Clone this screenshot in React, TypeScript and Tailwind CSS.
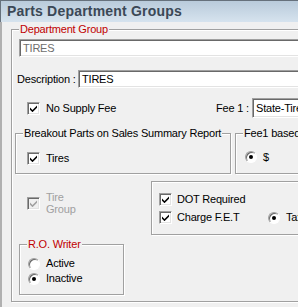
import type { ReactNode } from 'react';

function CheckMark({ disabled }: { disabled?: boolean }) {
  return (
    <svg width="7" height="7" viewBox="0 0 7 7">
      <path d="M0 2.5L2.5 5L7 0.5V2.8L2.5 7.2L0 4.8Z" fill={disabled ? '#a0a0a0' : '#000'} />
    </svg>
  );
}

function CheckBox({ checked, disabled }: { checked?: boolean; disabled?: boolean }) {
  return (
    <span
      className={`flex h-[13px] w-[13px] shrink-0 items-center justify-center border border-t-[#a0a0a0] border-l-[#a0a0a0] border-b-white border-r-white shadow-[inset_1px_1px_0_#696969,inset_-1px_-1px_0_#e3e3e3] ${
        disabled ? 'bg-[#f0f0f0]' : 'bg-white'
      }`}
    >
      {checked && <CheckMark disabled={disabled} />}
    </span>
  );
}

function Radio({ checked }: { checked?: boolean }) {
  return (
    <span className="flex h-[12px] w-[12px] shrink-0 items-center justify-center rounded-full border border-t-[#a0a0a0] border-l-[#a0a0a0] border-b-white border-r-white bg-white shadow-[inset_1px_1px_0_#696969]">
      {checked && <span className="h-[4px] w-[4px] rounded-full bg-black" />}
    </span>
  );
}

function TextBox({ value, disabled, className = '' }: { value: string; disabled?: boolean; className?: string }) {
  return (
    <div
      className={`flex items-center overflow-hidden whitespace-nowrap border border-t-[#a0a0a0] border-l-[#a0a0a0] border-b-white border-r-white bg-white pl-[3px] shadow-[inset_1px_1px_0_#696969,inset_-1px_-1px_0_#e3e3e3] ${
        disabled ? 'text-[#6d6d6d]' : 'text-black'
      } ${className}`}
    >
      {value}
    </div>
  );
}

function GroupBox({
  label,
  red,
  className = '',
  children,
}: {
  label?: string;
  red?: boolean;
  className?: string;
  children: ReactNode;
}) {
  return (
    <div className={`shrink-0 border border-[#a0a0a0] shadow-[inset_1px_1px_0_white,1px_1px_0_white] ${className}`}>
      {label && (
        <div
          className={`-mt-[7px] ml-[7px] h-[13px] w-fit whitespace-nowrap bg-[#f0f0f0] px-px leading-[13px] ${
            red ? 'text-[#c00000]' : 'text-black'
          }`}
        >
          {label}
        </div>
      )}
      {children}
    </div>
  );
}

export default function App() {
  return (
    <div className="h-[307px] w-[298px] overflow-hidden bg-[#f0f0f0] font-['Liberation_Sans',Arial,sans-serif] text-[11px] tracking-[-0.2px] text-black">
      <div className="flex h-[22px] items-center border-t border-l border-[#66717c] bg-gradient-to-b from-[#b9cbdb] to-[#d6e3ee] pl-[6px] text-[14px] font-bold tracking-[0.2px] text-[#3b4856]">
        Parts Department Groups
      </div>

      <div className="flex h-[285px] border-l-2 border-[#b0b0b0] pl-[9px] pt-[7px]">
        <GroupBox label="Department Group" red className="h-[273px] w-[300px]">
          <TextBox value="TIRES" disabled className="mt-[3px] ml-[7px] h-[18px]" />

          <div className="mt-[13px] ml-[5px] flex items-center">
            <span className="w-[61px] shrink-0">Description :</span>
            <TextBox value="TIRES" className="h-[18px] flex-1" />
          </div>

          <div className="mt-[10px] flex h-[20px] items-center pl-[15px]">
            <CheckBox checked />
            <span className="ml-[6px] w-[170px] shrink-0">No Supply Fee</span>
            <span className="w-[36px] shrink-0">Fee 1 :</span>
            <TextBox value="State-Tire Fee" className="h-[20px] flex-1 pl-[2px]" />
          </div>

          <div className="mt-[15px] flex">
            <GroupBox label="Breakout Parts on Sales Summary Report" className="ml-[3px] h-[41px] w-[216px]">
              <div className="mt-[10px] ml-[11px] flex items-center">
                <CheckBox checked />
                <span className="ml-[6px]">Tires</span>
              </div>
            </GroupBox>
            <GroupBox label="Fee1 based on" className="ml-[4px] h-[41px] flex-1">
              <div className="mt-[9px] ml-[9px] flex items-center">
                <Radio checked />
                <span className="ml-[6px]">$</span>
              </div>
            </GroupBox>
          </div>

          <div className="mt-[7px] flex">
            <div className="w-[139px] shrink-0">
              <div className="mt-[10px] ml-[15px] flex items-center">
                <CheckBox checked disabled />
                <span className="ml-[6px] leading-[12px] text-[#a0a0a0]">
                  Tire
                  <br />
                  Group
                </span>
              </div>

              <GroupBox label="R.O. Writer" red className="mt-[29px] ml-[7px] h-[51px] w-[105px]">
                <div className="mt-[5px] ml-[8px] flex h-[15px] items-center">
                  <Radio />
                  <span className="ml-[6px]">Active</span>
                </div>
                <div className="ml-[8px] flex h-[15px] items-center">
                  <Radio checked />
                  <span className="ml-[6px]">Inactive</span>
                </div>
              </GroupBox>
            </div>

            <GroupBox className="h-[54px] flex-1">
              <div className="mt-[11px] ml-[7px] flex h-[13px] items-center">
                <CheckBox checked />
                <span className="ml-[5px]">DOT Required</span>
              </div>
              <div className="mt-[5px] ml-[7px] flex h-[13px] items-center whitespace-nowrap">
                <CheckBox checked />
                <span className="ml-[5px] w-[91px] shrink-0">Charge F.E.T</span>
                <Radio checked />
                <span className="ml-[6px]">Taxable</span>
              </div>
            </GroupBox>
          </div>
        </GroupBox>
      </div>
    </div>
  );
}
